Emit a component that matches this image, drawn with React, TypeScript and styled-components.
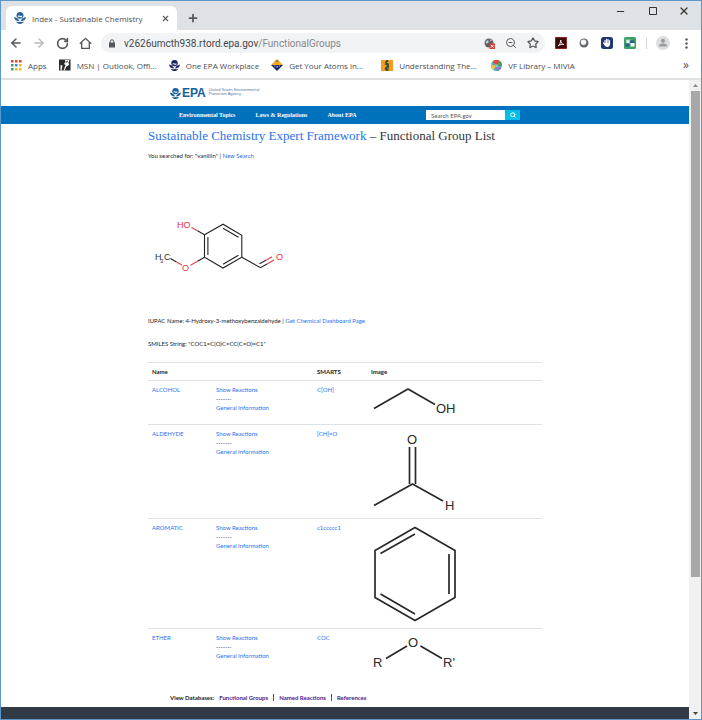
import React from 'react';
import styled, { createGlobalStyle } from 'styled-components';
import { ArrowLeft, ArrowRight, Minus, Plus, RotateCw, Search, Star, X, ZoomOut } from 'lucide-react';

const GlobalStyle = createGlobalStyle`
  * { box-sizing: border-box; }
  body { margin: 0; background: #fff; }
  button, input { font: inherit; border: 0; padding: 0; background: none; color: inherit; }
  a { text-decoration: none; color: inherit; }
  svg { display: block; flex: none; }
`;

const chromeFont = '"Open Sans", "Noto Sans", sans-serif';
const bodyFont = 'Lato, "Open Sans", sans-serif';
const logoFont = '"Liberation Sans", Arial, sans-serif';
const serifFont = '"Liberation Serif", "Times New Roman", serif';

const Window = styled.div`
  display: flex;
  flex-direction: column;
  min-height: 100vh;
  border: 1px solid #5b97c9;
  background: #fff;
  font-family: ${chromeFont};
  font-size: 8px;
  color: #4a4d51;
`;

/* ---------- browser chrome ---------- */

const TabStrip = styled.div`
  display: flex;
  justify-content: space-between;
  height: 29px;
  padding: 5px 12px 0 5px;
  background: #dee1e6;
`;

const TabGroup = styled.div`
  display: flex;
  align-items: center;
`;

const Tab = styled.div`
  display: flex;
  align-items: center;
  align-self: stretch;
  width: 171px;
  padding: 0 7px 0 8px;
  gap: 6px;
  border-radius: 6px 6px 0 0;
  background: #fff;
`;

const TabTitle = styled.span`
  flex: 1;
  white-space: nowrap;
`;

const IconButton = styled.button<{ $size?: number; $color?: string }>`
  display: flex;
  align-items: center;
  justify-content: center;
  flex: none;
  width: ${p => p.$size ?? 14}px;
  height: ${p => p.$size ?? 14}px;
  color: ${p => p.$color ?? '#54575b'};
`;

const NewTab = styled.div`
  margin-left: 9px;
`;

const WindowControls = styled.div`
  display: flex;
  gap: 19px;
  height: 10px;
  & button { height: 10px; color: #333; }
`;

const Toolbar = styled.div`
  display: flex;
  align-items: center;
  height: 26px;
  padding: 0 8px 0 8px;
  gap: 9px;
`;

const AddressBar = styled.div`
  display: flex;
  align-items: center;
  flex: 1;
  min-width: 0;
  height: 20px;
  padding: 0 5px 0 7px;
  gap: 8px;
  border-radius: 10px;
  background: #f1f3f4;
`;

const AddressText = styled.a`
  flex: 1;
  min-width: 0;
  overflow: hidden;
  white-space: nowrap;
  font: 10px Roboto, sans-serif;
  color: #44474b;
`;

const AddressPath = styled.span`
  color: #84888c;
`;

const Divider = styled.span`
  width: 1px;
  height: 11px;
  background: #d4d6d9;
`;

const Bookmarks = styled.nav`
  display: flex;
  align-items: center;
  height: 24px;
  padding: 0 12px 4px 10px;
  gap: 12px;
  border-bottom: 2px solid #e0e0e0;
`;

const Bookmark = styled.a<{ $fixed?: boolean }>`
  display: flex;
  align-items: center;
  flex: none;
  width: ${p => (p.$fixed ? '98px' : 'auto')};
  gap: 6px;
  white-space: nowrap;
`;

const More = styled.button`
  margin-left: auto;
  font-size: 12px;
  line-height: 12px;
`;

/* ---------- page ---------- */

const Viewport = styled.div`
  display: flex;
  flex: 1;
`;

const Page = styled.div`
  display: flex;
  flex-direction: column;
  flex: 1;
  min-width: 0;
  font: 6px/9px ${bodyFont};
  color: #212529;
`;

const Inner = styled.div`
  display: flex;
  align-items: center;
  width: 100%;
  max-width: 350px;
  margin: 0 auto;
`;

const Banner = styled.header`
  display: flex;
  height: 26px;
`;

const Logo = styled.a`
  display: flex;
  align-items: center;
  gap: 1px;
  color: #18609b;
`;

const Wordmark = styled.span`
  font: bold 12px/12px ${logoFont};
`;

const Tagline = styled.span`
  margin-left: 2px;
  padding-bottom: 3px;
  font: 4px/4px ${logoFont};
  color: #56799f;
`;

const NavBar = styled.nav`
  display: flex;
  height: 18px;
  background: #0071bc;
`;

const NavLinks = styled.div`
  display: flex;
  flex: 1;
  gap: 20px;
  padding-left: 9px;
  font: bold 6px/9px ${serifFont};
  color: #fff;
`;

const SearchForm = styled.form`
  display: flex;
  width: 94px;
  height: 10px;
`;

const SearchInput = styled.input`
  flex: 1;
  min-width: 0;
  padding: 0 5px;
  background: #fff;
  color: #444;
  &::placeholder { color: #555; opacity: 1; }
`;

const SearchButton = styled.button`
  display: flex;
  align-items: center;
  justify-content: center;
  width: 15px;
  background: #02bfe7;
  color: #fff;
`;

const Main = styled.main`
  width: 100%;
  max-width: 394px;
  margin: 0 auto;
`;

const Title = styled.h1`
  margin: 4px 0 7px;
  font: 13px/16px ${serifFont};
  color: #333639;
`;

const Link = styled.a`
  color: #1f72ee;
`;

const Line = styled.p`
  margin: 0 0 14px;
`;

const Molecule = styled.div`
  padding: 45px 0 41px;
`;

const Table = styled.table`
  width: 100%;
  border-collapse: collapse;
  table-layout: fixed;
`;

const HeadCell = styled.th<{ $width?: number }>`
  width: ${p => (p.$width ? `${p.$width}px` : 'auto')};
  padding: 4px;
  height: 17px;
  border-top: 1px solid #dee2e6;
  text-align: left;
`;

const Cell = styled.td`
  padding: 4px;
  border-top: 1px solid #dee2e6;
  vertical-align: top;
`;

const FooterLinks = styled.div`
  display: flex;
  align-items: center;
  width: 100%;
  max-width: 350px;
  margin: auto auto 5px;
  gap: 5px;
  font-weight: bold;
`;

const FooterLink = styled.a`
  color: #46218c;
`;

const FooterRule = styled.span`
  width: 1px;
  height: 7px;
  background: #555;
`;

const DarkBand = styled.footer`
  height: 12px;
  background: #323a45;
`;

const ScrollBar = styled.div`
  display: flex;
  flex-direction: column;
  width: 12px;
  padding: 0 1px 0 2px;
  background: #f1f1f1;
`;

const ScrollArrow = styled.button`
  display: flex;
  align-items: center;
  justify-content: center;
  height: 11px;
`;

const ScrollThumb = styled.div`
  flex: 485;
  background: #a8a8a8;
`;

const ScrollRest = styled.div`
  flex: 131;
`;

/* ---------- drawings ---------- */

const EpaMark = ({ size = 11, color = '#18609b' }: { size?: number; color?: string }) => (
  <svg width={size} height={size} viewBox="0 0 24 24" fill={color} aria-hidden="true">
    <path d="M12 0a7 7 0 0 1 7 7c0 3.800-3 6.500-7 6.500S5 10.800 5 7a7 7 0 0 1 7-7Z" />
    <path d="M8 7.500c1.500-1 2.500-.5 4 .2s2.500.5 4-.5v2.600c-1.500 1-2.500 1-4 .3s-2.500-1-4-.2Z" fill="#fff" />
    <path d="M0 10c5 .5 9 3.500 11 8.500C5 18.500 .5 16 0 10Z" />
    <path d="M24 10c-5 .5-9 3.500-11 8.500 6 0 10.500-2.500 11-8.500Z" />
    <path d="M3.500 19c3 1.500 6 1.500 8.500.5 2.500 1 5.500 1 8.500-.5-2 3-5 5-8.500 5S5.500 22 3.500 19Z" />
  </svg>
);

const HomeIcon = () => (
  <svg width="13" height="13" viewBox="0 0 24 24" fill="none" stroke="currentColor" strokeWidth="2.400" aria-hidden="true">
    <path d="M1.500 12.500 12 2.500l10.500 10M5 10v11h14V10" />
  </svg>
);

const LockIcon = () => (
  <svg width="8" height="9" viewBox="0 0 16 18" aria-hidden="true">
    <path d="M2 7h12v10H2z" fill="#54575b" />
    <path d="M4.500 8V5a3.500 3.500 0 0 1 7 0v3" fill="none" stroke="#54575b" strokeWidth="2" />
  </svg>
);

const SquareIcon = () => (
  <svg width="8" height="8" viewBox="0 0 8 8" aria-hidden="true">
    <path d="M.5.5h7v7h-7z" fill="none" stroke="currentColor" />
  </svg>
);

const AppsIcon = () => {
  const colors = ['#e94235', '#e94235', '#e94235', '#34a853', '#4285f4', '#fbbc05', '#34a853', '#fbbc05', '#fbbc05'];
  return (
    <svg width="11" height="11" viewBox="0 0 11 11" aria-hidden="true">
      {colors.map((c, i) => (
        <rect key={i} x={(i % 3) * 4} y={Math.floor(i / 3) * 4} width="2.500" height="2.500" fill={c} />
      ))}
    </svg>
  );
};

const MsnIcon = () => (
  <svg width="12" height="12" viewBox="0 0 24 24" aria-hidden="true">
    <path fill="#2b2b2b" d="M0 1h23v22H0z" />
    <path fill="#fff" d="M12 2h9l-2 5 1 5-5 3-4 8H9l4-11-3-2 3-4ZM3 12l4 1-1 5-1 5H3Z" />
    <path fill="#2b2b2b" d="m14 5 4-2-1 3-2 2Z" />
  </svg>
);

const AtomsIcon = () => (
  <svg width="12" height="12" viewBox="0 0 24 24" aria-hidden="true">
    <path fill="#f5aa1b" d="M12 0 24 12H0Z" />
    <path fill="#182568" d="M0 12h24L12 24Z" />
    <path fill="#aab4d4" d="M6 13h3v2H6zm5 1h3v3h-3zm5-1h2v2h-2z" />
    <path fill="#86765b" d="M9 3h6v3H9z" />
  </svg>
);

const LizardIcon = () => (
  <svg width="12" height="11" viewBox="0 0 24 22" aria-hidden="true">
    <path fill="#f59b20" d="M0 0h24v22H0z" />
    <path fill="none" stroke="#304d2c" strokeWidth="4" d="M14 1c-5 2-4 5-2 7s4 5 0 7-3 4 3 6" />
    <path stroke="#304d2c" strokeWidth="1.500" d="m7 8 5 2 5-3M8 17l4-3 4 3" fill="none" />
  </svg>
);

const BallIcon = () => (
  <svg width="11" height="11" viewBox="0 0 22 22" aria-hidden="true">
    <circle cx="11" cy="11" r="11" fill="#4aa9cf" />
    <path fill="#e7463b" d="M11 11 3 3a11 11 0 0 1 15-1Z" />
    <path fill="#f4c430" d="M11 11 0 9a11 11 0 0 0 5 11Z" />
    <path fill="#49a34e" d="m11 11 7-9a11 11 0 0 1 4 10Z" />
    <path fill="#b96bb3" d="m11 11 1 11a11 11 0 0 0 8-5Z" />
    <path fill="#7fc4e0" d="M8 9h6v5H8z" />
  </svg>
);

const CookieIcon = () => (
  <svg width="11" height="11" viewBox="0 0 22 22" aria-hidden="true">
    <circle cx="10" cy="10" r="9" fill="#5b6066" />
    <path fill="#c5c9cd" d="m3 7 5-3 2 4-5 4Zm8-5 5 3-3 2Z" />
    <path fill="#db4437" d="M11 11h11v11H11z" />
    <path stroke="#fff" strokeWidth="2" d="m14 14 5 5m0-5-5 5" />
  </svg>
);

const AcrobatIcon = () => (
  <svg width="12" height="12" viewBox="0 0 24 24" aria-hidden="true">
    <path fill="#3b0b08" stroke="#8b2118" strokeWidth="2" d="M1 1h22v22H1z" />
    <path fill="none" stroke="#fff" strokeWidth="1.800" d="M6 18c3-2 5.500-7 5.500-12 0 5 2.500 9 6.500 9-4-1-8 0-12 3Z" />
  </svg>
);

const RingIcon = () => (
  <svg width="10" height="10" viewBox="0 0 20 20" aria-hidden="true">
    <circle cx="10" cy="10" r="9" fill="#66696d" />
    <circle cx="9" cy="8.500" r="5.500" fill="#f5f5f5" />
  </svg>
);

const HandIcon = () => (
  <svg width="12" height="12" viewBox="0 0 24 24" aria-hidden="true">
    <rect width="24" height="24" rx="5" fill="#21366f" />
    <path fill="none" stroke="#fff" strokeWidth="2.400" strokeLinecap="round" d="M8 13V7m3 5V4.500m3 7.500V5m3 8V7M5 12l3 4" />
    <path fill="#fff" d="M7 12h11.200c0 5-2 8-5.500 8S8 17.500 7 15Z" />
  </svg>
);

const PanelsIcon = () => (
  <svg width="12" height="12" viewBox="0 0 24 24" aria-hidden="true">
    <rect width="24" height="24" rx="3" fill="#3b9f68" />
    <path fill="#a5d8c0" d="M4 5h9v8H4z" />
    <path fill="#2c5f86" d="M11 7h10v5H11zM3 13h8v6H3z" />
    <path fill="#fff" d="M13 12h8v7h-8zM6 7h5v5H6z" />
  </svg>
);

const AvatarIcon = () => (
  <svg width="14" height="14" viewBox="0 0 28 28" aria-hidden="true">
    <circle cx="14" cy="14" r="14" fill="#dcdee0" />
    <circle cx="14" cy="9.500" r="4" fill="#989b9f" />
    <path fill="#989b9f" d="M6 20c0-4 5-5 8-5s8 1 8 5v1H6Z" />
  </svg>
);

const DotsIcon = () => (
  <svg width="3" height="11" viewBox="0 0 3 11" fill="#54575b" aria-hidden="true">
    <circle cx="1.500" cy="1.500" r="1.200" />
    <circle cx="1.500" cy="5.500" r="1.200" />
    <circle cx="1.500" cy="9.500" r="1.200" />
  </svg>
);

const Arrow = ({ down = false }: { down?: boolean }) => (
  <svg width="5" height="3" viewBox="0 0 5 3" fill={down ? '#444' : '#888'} aria-hidden="true">
    <path d={down ? 'M0 0h5L2.500 3Z' : 'M0 3h5L2.500 0Z'} />
  </svg>
);

const Vanillin = () => (
  <svg width="144" height="56" viewBox="148 218 144 56" fontFamily="Liberation Sans" fontSize="9" fill="none" stroke="#222" strokeWidth="1.100" role="img" aria-label="Vanillin">
    <path d="m204.500 233.800 18.500-10.600 18.800 11v22.100L223 267l-18.500-10.700Z" />
    <path d="M207.900 236v18M223 227.200l15.500 9M238.500 254.300 223 263.200M241.800 256.300l18.700 10.400 6.500-3.700M170.500 257.500l6 3.400M259.500 262.700l6.500-3.500M197.500 229.800l7 4M204.500 256.300l-7 4" />
    <path stroke="#e5414a" d="m191.500 226.500 6 3.300M197.500 260.300l-7 4M176.500 260.900l5.500 3.100M267 263l7-4M266 259.200l6-3.400" />
    <g stroke="none">
      <text x="177" y="227" fill="#e5313a">HO</text>
      <text x="182" y="270" fill="#e5313a">O</text>
      <text x="276" y="259" fill="#e5313a">O</text>
      <text x="155" y="259" fill="#333">H</text>
      <text x="160" y="262" fill="#333" fontSize="6">3</text>
      <text x="164" y="259" fill="#333">C</text>
    </g>
  </svg>
);

const Sketch = ({ height, label, d, children }: { height: number; label: string; d: string; children?: React.ReactNode }) => (
  <svg width="90" height={height} viewBox={`0 0 90 ${height}`} fontFamily="Liberation Sans" fontSize="13" fill="#292929" role="img" aria-label={label}>
    <path d={d} fill="none" stroke="#292929" strokeWidth="1.700" strokeLinejoin="round" />
    {children}
  </svg>
);

const rows = [
  {
    name: 'ALCOHOL',
    smarts: 'C[OH]',
    image: (
      <Sketch height={35} label="Alcohol" d="m3 23.500 34-19.500 27 15.500">
        <text x="65" y="28">OH</text>
      </Sketch>
    ),
  },
  {
    name: 'ALDEHYDE',
    smarts: '[CH]=O',
    image: (
      <Sketch height={85} label="Aldehyde" d="m3 76.500 38.500-21.500L72 72M38.500 18v37M44.500 18v37">
        <text x="36" y="15">O</text>
        <text x="74" y="81">H</text>
      </Sketch>
    ),
  },
  {
    name: 'AROMATIC',
    smarts: 'c1ccccc1',
    image: (
      <Sketch height={101} label="Aromatic ring" d="M44 4.500 84 27.500v47L44 97.500 4 74.500v-47ZM44 11 9.500 30.500M78 31v40M44 91 9.500 71" />
    ),
  },
  {
    name: 'ETHER',
    smarts: 'COC',
    image: (
      <Sketch height={36} label="Ether" d="m15 25.500 21-12.500M49.500 13 71 25.500">
        <text x="37" y="14">O</text>
        <text x="2" y="34">R</text>
        <text x="72" y="34">R'</text>
      </Sketch>
    ),
  },
];

export default function App() {
  return (
    <Window>
      <GlobalStyle />
      <TabStrip>
        <TabGroup>
          <Tab>
            <EpaMark size={12} color="#2b6299" />
            <TabTitle>Index - Sustainable Chemistry</TabTitle>
            <IconButton $size={10} aria-label="Close tab"><X size={9} strokeWidth={3} /></IconButton>
          </Tab>
          <NewTab>
            <IconButton aria-label="New tab"><Plus size={12} strokeWidth={3.500} /></IconButton>
          </NewTab>
        </TabGroup>
        <WindowControls>
          <IconButton aria-label="Minimize"><Minus size={11} strokeWidth={2.500} /></IconButton>
          <IconButton aria-label="Maximize"><SquareIcon /></IconButton>
          <IconButton $size={10} aria-label="Close window"><X size={12} strokeWidth={2.500} /></IconButton>
        </WindowControls>
      </TabStrip>

      <Toolbar>
        <IconButton aria-label="Back"><ArrowLeft size={14} strokeWidth={2.500} /></IconButton>
        <IconButton $color="#b8babd" aria-label="Forward"><ArrowRight size={14} strokeWidth={2.500} /></IconButton>
        <IconButton aria-label="Reload"><RotateCw size={13} strokeWidth={3} /></IconButton>
        <IconButton aria-label="Home"><HomeIcon /></IconButton>
        <AddressBar>
          <LockIcon />
          <AddressText href="#address">
            v2626umcth938.rtord.epa.gov<AddressPath>/FunctionalGroups</AddressPath>
          </AddressText>
          <IconButton aria-label="Cookies blocked"><CookieIcon /></IconButton>
          <IconButton aria-label="Zoom"><ZoomOut size={12} strokeWidth={2} /></IconButton>
          <IconButton aria-label="Bookmark this page"><Star size={12} strokeWidth={2.500} /></IconButton>
        </AddressBar>
        <IconButton aria-label="Acrobat"><AcrobatIcon /></IconButton>
        <IconButton aria-label="Recorder"><RingIcon /></IconButton>
        <IconButton aria-label="Blocker"><HandIcon /></IconButton>
        <IconButton aria-label="Panels"><PanelsIcon /></IconButton>
        <Divider />
        <IconButton aria-label="Profile"><AvatarIcon /></IconButton>
        <IconButton aria-label="Menu"><DotsIcon /></IconButton>
      </Toolbar>

      <Bookmarks aria-label="Bookmarks">
        <Bookmark href="#apps"><AppsIcon />Apps</Bookmark>
        <Bookmark href="#msn" $fixed><MsnIcon />MSN | Outlook, Offi...</Bookmark>
        <Bookmark href="#one-epa"><EpaMark size={11} color="#1b2463" />One EPA Workplace</Bookmark>
        <Bookmark href="#atoms" $fixed><AtomsIcon />Get Your Atoms in...</Bookmark>
        <Bookmark href="#understanding" $fixed><LizardIcon />Understanding The...</Bookmark>
        <Bookmark href="#mivia"><BallIcon />VF Library – MIVIA</Bookmark>
        <More aria-label="More bookmarks">»</More>
      </Bookmarks>

      <Viewport>
        <Page>
          <Banner>
            <Inner>
              <Logo href="#epa">
                <EpaMark />
                <Wordmark>EPA</Wordmark>
                <Tagline>United States Environmental<br />Protection Agency</Tagline>
              </Logo>
            </Inner>
          </Banner>
          <NavBar>
            <Inner>
              <NavLinks>
                <a href="#topics">Environmental Topics</a>
                <a href="#laws">Laws &amp; Regulations</a>
                <a href="#about">About EPA</a>
              </NavLinks>
              <SearchForm>
                <SearchInput aria-label="Search EPA.gov" placeholder="Search EPA.gov" />
                <SearchButton type="button" aria-label="Search"><Search size={6} strokeWidth={4} /></SearchButton>
              </SearchForm>
            </Inner>
          </NavBar>

          <Main>
            <Title><Link href="#framework">Sustainable Chemistry Expert Framework</Link> – Functional Group List</Title>
            <Line>You searched for: "vanillin" | <Link href="#search">New Search</Link></Line>
            <Molecule><Vanillin /></Molecule>
            <Line>IUPAC Name: 4-Hydroxy-3-methoxybenzaldehyde | <Link href="#dashboard">Get Chemical Dashboard Page</Link></Line>
            <Line>SMILES String: "COC1=C(O)C=CC(C=O)=C1"</Line>
            <Table>
              <thead>
                <tr>
                  <HeadCell $width={64} scope="col">Name</HeadCell>
                  <HeadCell $width={101} aria-label="Actions" />
                  <HeadCell $width={54} scope="col">SMARTS</HeadCell>
                  <HeadCell scope="col">Image</HeadCell>
                </tr>
              </thead>
              <tbody>
                {rows.map(row => (
                  <tr key={row.name}>
                    <Cell><Link href="#group">{row.name}</Link></Cell>
                    <Cell>
                      <Link href="#reactions">Show Reactions</Link><br />
                      -------<br />
                      <Link href="#info">General Information</Link>
                    </Cell>
                    <Cell><Link href="#smarts">{row.smarts}</Link></Cell>
                    <Cell>{row.image}</Cell>
                  </tr>
                ))}
              </tbody>
            </Table>
          </Main>

          <FooterLinks>
            <span>View Databases:</span>
            <FooterLink href="#groups">Functional Groups</FooterLink>
            <FooterRule />
            <FooterLink href="#named">Named Reactions</FooterLink>
            <FooterRule />
            <FooterLink href="#references">References</FooterLink>
          </FooterLinks>
          <DarkBand />
        </Page>
        <ScrollBar>
          <ScrollArrow aria-label="Scroll up"><Arrow /></ScrollArrow>
          <ScrollThumb />
          <ScrollRest />
          <ScrollArrow aria-label="Scroll down"><Arrow down /></ScrollArrow>
        </ScrollBar>
      </Viewport>
    </Window>
  );
}
